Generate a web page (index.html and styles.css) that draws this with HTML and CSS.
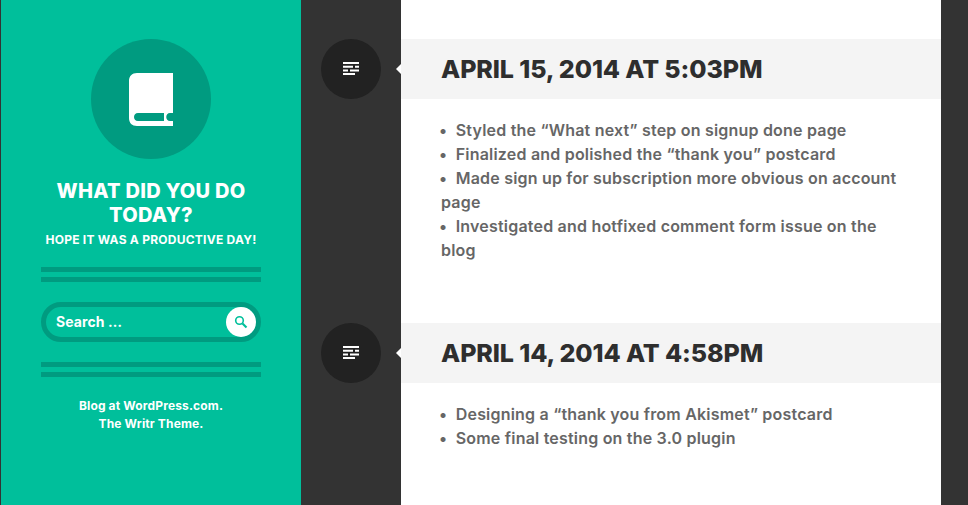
FILE: index.html
```html
<!DOCTYPE html>
<html lang="en">
<head>
  <meta charset="UTF-8" />
  <title>What did you do today?</title>
  <link rel="stylesheet" href="styles.css">
</head>
<body>

  <aside class="sidebar">
    <div class="logo">
      <svg width="44" height="53" viewBox="0 0 44 53">
        <path fill="#fff" fill-rule="evenodd" d="M8 0H44V53H8C3 53 0 50 0 45V8C0 3 3 0 8 0ZM9 40H35V48H9C3.700 48 3.700 40 9 40ZM44 40V48H41C36 48 36 40 41 40Z"/>
      </svg>
    </div>
    <h1 class="site-title">What did you do today?</h1>
    <p class="site-desc">Hope it was a productive day!</p>
    <hr class="rule" />
    <form class="search">
      <span class="search-text">Search …</span>
      <span class="search-btn">
        <svg width="14" height="14" viewBox="0 0 14 14">
          <circle cx="5.500" cy="5.500" r="3.800" fill="none" stroke="#00bf9b" stroke-width="1.600"/>
          <path d="M8.500 8.500L12.500 12.500" stroke="#00bf9b" stroke-width="2.200"/>
        </svg>
      </span>
    </form>
    <hr class="rule" />
    <p class="credit">Blog at WordPress.com.<br />The Writr Theme.</p>
  </aside>

  <main class="timeline">
    <article class="entry">
      <div class="entry-icon">
        <svg width="16" height="14" viewBox="0 0 16 14">
          <path fill="#fff" d="M0 0H16V2H0ZM0 3.700H10V5.700H0ZM12 3.700H16V5.700H12ZM0 7.400H5V9.400H0ZM7 7.400H16V9.400H7ZM0 11.100H12V13.100H0Z" />
        </svg>
      </div>
      <header class="entry-head"><h2>April 15, 2014 at 5:03pm</h2></header>
      <div class="entry-body">
        <p>•&nbsp;&nbsp;Styled the “What next” step on signup done page</p>
        <p>•&nbsp;&nbsp;Finalized and polished the “thank you” postcard</p>
        <p>•&nbsp;&nbsp;Made sign up for subscription more obvious on account page</p>
        <p>•&nbsp;&nbsp;Investigated and hotfixed comment form issue on the blog</p>
      </div>
    </article>
    <article class="entry">
      <div class="entry-icon">
        <svg width="16" height="14" viewBox="0 0 16 14">
          <path fill="#fff" d="M0 0H16V2H0ZM0 3.700H10V5.700H0ZM12 3.700H16V5.700H12ZM0 7.400H5V9.400H0ZM7 7.400H16V9.400H7ZM0 11.100H12V13.100H0Z" />
        </svg>
      </div>
      <header class="entry-head"><h2>April 14, 2014 at 4:58pm</h2></header>
      <div class="entry-body">
        <p>•&nbsp;&nbsp;Designing a “thank you from Akismet” postcard</p>
        <p>•&nbsp;&nbsp;Some final testing on the 3.0 plugin</p>
      </div>
    </article>
  </main>

</body>
</html>
```

FILE: styles.css
```css
html,
body {
  height: 505px;
  overflow: hidden;
}

body {
  margin: 0;
  padding-left: 1px;
  background: #333;
  display: flex;
  font-family: 'Inter', sans-serif;
  box-sizing: border-box;
}

.sidebar {
  width: 300px;
  box-sizing: border-box;
  padding: 39px 40px 0;
  background: #00bf9b;
  color: #fff;
  text-align: center;
}

.logo {
  width: 120px;
  height: 120px;
  margin: 0 auto 20px;
  border-radius: 50%;
  background: #009b80;
  display: flex;
  align-items: center;
  justify-content: center;
}

.site-title {
  margin: 0;
  font-size: 20px;
  line-height: 24px;
  font-weight: 800;
  letter-spacing: 0.25px;
  text-transform: uppercase;
}

.site-desc {
  margin: 6px 0 0;
  font-size: 12px;
  line-height: 14px;
  font-weight: 700;
  letter-spacing: 0.25px;
  text-transform: uppercase;
}

.rule {
  margin: 20px 0;
  border: 0;
  border-top: 15px double #009b80;
  height: 0;
}

.search {
  height: 40px;
  box-sizing: border-box;
  border: 5px solid #009b80;
  border-radius: 20px;
  display: flex;
  align-items: center;
  justify-content: space-between;
  padding-left: 10px;
}

.search-text {
  padding-bottom: 2px;
  font-size: 14px;
  font-weight: 700;
  letter-spacing: 0.1px;
}

.search-btn {
  width: 30px;
  height: 30px;
  border-radius: 50%;
  background: #fff;
  display: flex;
  align-items: center;
  justify-content: center;
}

.credit {
  margin: 20px 0 0;
  font-size: 12px;
  line-height: 18px;
  font-weight: 700;
  letter-spacing: 0.15px;
}

.timeline {
  margin-left: 100px;
  width: 540px;
  background: #fff;
}

.entry {
  position: relative;
  padding-top: 39px;
}

.entry-icon {
  position: absolute;
  left: -80px;
  top: 39px;
  width: 60px;
  height: 60px;
  border-radius: 50%;
  background: #222;
  display: flex;
  align-items: center;
  justify-content: center;
}

.entry-icon::after {
  content: "";
  position: absolute;
  left: 75px;
  top: 25px;
  border: 5px solid transparent;
  border-right-color: #fff;
  border-left-width: 0;
}

.entry-head {
  height: 60px;
  padding-left: 40px;
  background: #f4f4f4;
  display: flex;
  align-items: center;
}

.entry-head h2 {
  margin: 0;
  font-size: 25px;
  font-weight: 800;
  letter-spacing: -0.1px;
  color: #2e2e2e;
  text-transform: uppercase;
}

.entry-body {
  padding: 19px 40px 22px;
}

.entry-body p {
  margin: 0;
  font-size: 16px;
  line-height: 24px;
  font-weight: 600;
  letter-spacing: 0.2px;
  text-indent: -2px;
  color: #666;
}
```
